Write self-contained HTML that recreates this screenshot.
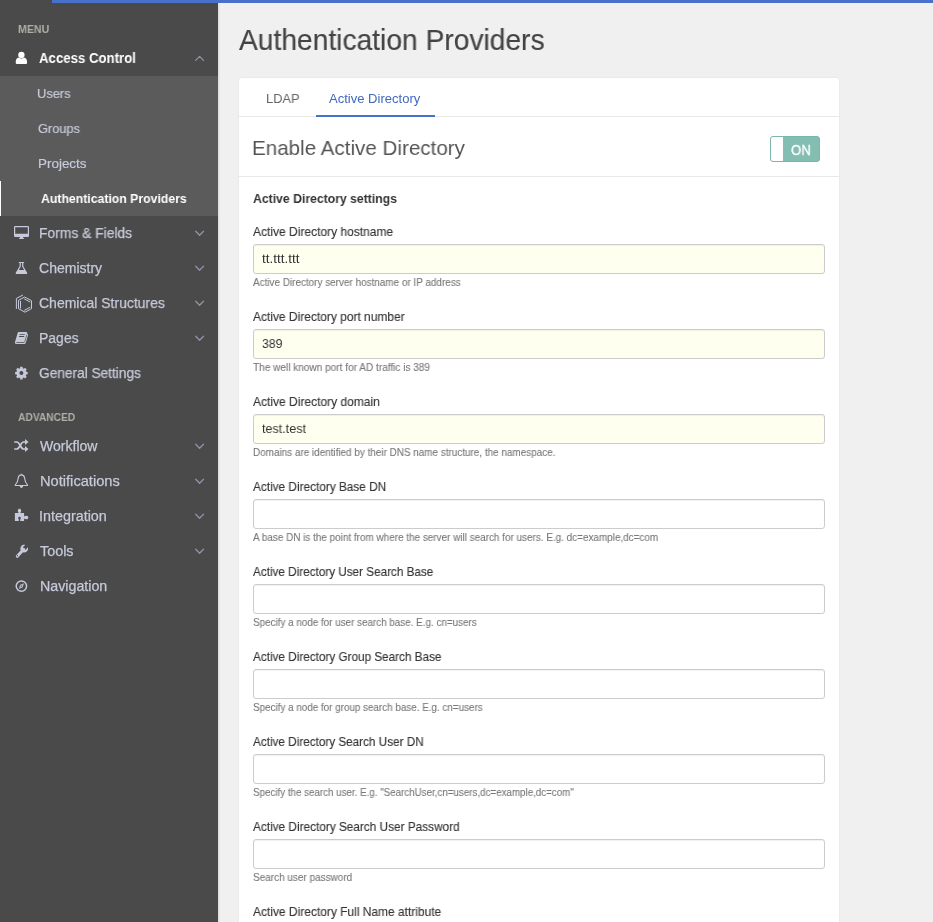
<!DOCTYPE html>
<html lang="en">
<head>
<meta charset="utf-8">
<title>Authentication Providers</title>
<style>
*{box-sizing:border-box;margin:0;padding:0}
html,body{width:933px;height:922px;overflow:hidden;background:#f0f0f0;font-family:"Liberation Sans",sans-serif;color:#444}
body{position:relative}
.abs{position:absolute;white-space:nowrap}
.t{position:absolute;white-space:nowrap;line-height:1;transform-origin:0 50%;will-change:transform}
#topbar{left:52px;top:0;width:881px;height:3px;background:#4872c9}
#sidebar{left:0;top:0;width:218px;height:922px;background:#4a4a4a;box-shadow:1px 0 2px rgba(0,0,0,.1)}
#submenu{left:0;top:76px;width:218px;height:140px;background:#5b5b5b}
#activebar{left:0;top:181px;width:1px;height:35px;background:#fff}
.sect{font-size:11px;font-weight:bold;color:#afafa6}
.nav{font-size:14px;color:#c6c9d9;-webkit-text-stroke:0.25px #c6c9d9}
.nav.act{color:#fff;font-weight:bold;-webkit-text-stroke:0}
.sub{font-size:13px;color:#c6c9d9;-webkit-text-stroke:0.2px #c6c9d9}
.sub.act{color:#fff;font-weight:bold;-webkit-text-stroke:0}
.title{font-size:28.6px;color:#444;-webkit-text-stroke:0.15px #444}
.tab{font-size:13px}
.h2{font-size:21px;color:#555}
.on{font-size:14px;color:#fff;-webkit-text-stroke:0.3px #fff}
.sett{font-size:13px;font-weight:bold;color:#333}
.lbl{font-size:12.6px;color:#333;-webkit-text-stroke:0.12px #333}
.val{font-size:13px;color:#333}
.help{font-size:10.4px;color:#777;-webkit-text-stroke:0.1px #777}
#card{left:239px;top:78px;width:600px;height:860px;background:#fff;border-radius:3px;box-shadow:0 0 2px rgba(0,0,0,.09)}
.hr{left:239px;width:600px;height:1px;background:#e8e8e8}
#tabline{left:316px;top:115px;width:119px;height:2px;background:#4872c9}
#toggle{left:770px;top:136px;width:50px;height:26px;border-radius:3px;background:#84bdb2;border:1px solid #7db6ab}
#knob{left:771px;top:137px;width:12px;height:24px;background:#fff;border-radius:2px 0 0 2px}
.inp{left:253px;width:572px;height:30px;border:1px solid #ccc;border-radius:3px;background:#fff;box-shadow:inset 0 1px 1px rgba(0,0,0,.06)}
.inp.y{background:#fffff0}
svg{position:absolute;overflow:visible}
</style>
</head>
<body>
<div class="abs" id="sidebar"></div>
<div class="abs" id="submenu"></div>
<div class="abs" id="activebar"></div>
<div class="abs" id="topbar"></div>
<div class="abs" id="card"></div>
<div class="abs hr" style="top:116px"></div>
<div class="abs" id="tabline"></div>
<div class="abs hr" style="top:176px"></div>
<div class="abs" id="toggle"></div>
<div class="abs" id="knob"></div>
<div class="abs inp y" style="top:244px"></div>
<div class="abs inp y" style="top:329px"></div>
<div class="abs inp y" style="top:414px"></div>
<div class="abs inp" style="top:499px"></div>
<div class="abs inp" style="top:584px"></div>
<div class="abs inp" style="top:669px"></div>
<div class="abs inp" style="top:754px"></div>
<div class="abs inp" style="top:839px"></div>
<svg style="left:0;top:0" width="218" height="922" viewBox="0 0 218 922">
<g fill="#fff"><circle cx="21.4" cy="54.9" r="3.15"/><path d="M15.7 62.6c0-3.2 1-5 3.2-5.2.7.7 1.5 1 2.5 1s1.800-.3 2.500-1c2.200.2 3.200 2 3.200 5.200 0 1-.6 1.500-1.600 1.500h-8.200c-1 0-1.600-.5-1.600-1.500z"/></g>
<g fill="#c6c9d9"><path fill-rule="evenodd" d="M15.200 226h12.600a1.200 1.200 0 0 1 1.200 1.200v8.600a1.200 1.200 0 0 1-1.200 1.200h-12.600a1.200 1.200 0 0 1-1.200-1.200v-8.600a1.200 1.200 0 0 1 1.200-1.200zM15.200 227.200v6.500h12.600v-6.500z"/><path d="M20 237h3l.4 1.300h.700v.700h-5.200v-.700h.700z"/></g>
<g fill="#c6c9d9"><path fill-rule="evenodd" d="M18.800 261.900h5.300v1h-.8v3.300l3.700 6.200c.5.900.1 1.600-.9 1.600h-9.300c-1 0-1.400-.7-.9-1.600l3.700-6.200v-3.300h-.8zM20.800 262.900v3.600l-2 3.500h5.400l-2.100-3.500v-3.600z"/></g>
<g fill="none" stroke="#c6c9d9" stroke-width="1" stroke-linejoin="round" stroke-linecap="round"><path d="M25 297.200l6.500 3.500v8l-6.500 3.500-6.500-3.500v-8z"/><path d="M20.500 301.300v6.800M24.500 299l5.400 2.900M24.600 310.200l5.300-2.800"/><path d="M16.400 308.500v-10.100l6.200-3.200"/></g>
<g fill="#c6c9d9"><path fill-rule="evenodd" d="M19 332.100h7.300c.6 0 .9.400.7 1l-.1.400c.9.100 1.400.8 1.100 1.700l-2.200 7.600c-.3.900-.9 1.300-1.800 1.300h-7.500c-1.200 0-1.900-.9-1.500-2l2.500-8.700c.3-.9.800-1.300 1.500-1.300zM19.700 333.900l-.2.800h5.200l.2-.8zM19.100 336.100l-.2.800h5.200l.2-.8zM16.300 341.900c-.2.600.1.900.6.900h7.100l.3-.9z"/><path d="M24.600 342.400l2.300-7.800" stroke="#4a4a4a" stroke-width=".7" fill="none"/></g>
<path fill="#c6c9d9" fill-rule="evenodd" d="M20.07 368.28L20.19 366.82L22.61 366.82L22.73 368.28L23.86 368.75L24.99 367.80L26.70 369.51L25.75 370.64L26.22 371.77L27.68 371.89L27.68 374.31L26.22 374.43L25.75 375.56L26.70 376.69L24.99 378.40L23.86 377.45L22.73 377.92L22.61 379.38L20.19 379.38L20.07 377.92L18.94 377.45L17.81 378.40L16.10 376.69L17.05 375.56L16.58 374.43L15.12 374.31L15.12 371.89L16.58 371.77L17.05 370.64L16.10 369.51L17.81 367.80L18.94 368.75ZM19.4 373.1a2 2 0 1 0 4 0a2 2 0 1 0-4 0Z"/>
<g fill="none" stroke="#c6c9d9" stroke-width="1.700"><path d="M14.200 442h2.600c3.200 0 3.600 7 6.800 7h2.400"/><path d="M14.200 449h2.600c3.200 0 3.600-7 6.800-7h2.400"/></g><g fill="#c6c9d9"><path d="M25 439v6l3.500-3z"/><path d="M25 446v6l3.500-3z"/></g>
<g fill="none" stroke="#c6c9d9" stroke-width="1.100" stroke-linejoin="round"><path d="M21.400 474.900c-1.900 0-3 1.300-3.200 3.200-.3 3.300-.9 5-2.900 6.800v.6h12.200v-.6c-2-1.800-2.600-3.500-2.900-6.800-.2-1.900-1.300-3.200-3.200-3.200z"/></g><path fill="#c6c9d9" d="M19.800 486.100h3.300c0 1.100-.7 1.900-1.650 1.900s-1.650-.8-1.650-1.900zM21 473.700h.8v1.200h-.8z"/>
<g fill="#c6c9d9"><path fill-rule="evenodd" d="M14.900 513h3.900c-.7-.6-1-1.400-1-2.300 0-1.100.8-1.900 1.700-1.900s1.700.8 1.700 1.900c0 .9-.3 1.700-1 2.300h3.900v3.500c.6-.5 1.300-.8 2.300-.8 1.100 0 1.900.8 1.900 1.800s-.8 1.800-1.900 1.800c-1 0-1.700-.3-2.300-.8v2.500h-3.900v-1.700c.4-.3.600-.7.600-1.200 0-.8-.6-1.400-1.300-1.400s-1.300.6-1.300 1.400c0 .5.200.9.600 1.200v1.700h-3.900z"/></g>
<g><path d="M17.300 556.300l6.400-7" stroke="#c6c9d9" stroke-width="3" stroke-linecap="round" fill="none"/><path fill="#c6c9d9" d="M27.900 547.200c.5 1.700 0 3.300-1.200 4.300-1.500 1.200-3.600 1.200-5 0-1.600-1.400-1.800-3.700-.5-5.300 1-1.200 2.500-1.700 4-1.300l-2.300 2.400.5 2 2 .6z"/><circle cx="17.400" cy="555.700" r=".6" fill="#4a4a4a"/></g>
<g><circle cx="21.400" cy="586.100" r="5.200" fill="none" stroke="#c6c9d9" stroke-width="1.500"/><path fill="#c6c9d9" opacity=".85" d="M24 583.200l-1.300 4.200-3.900 1.600 1.300-4.200z"/><circle cx="21.400" cy="586.100" r=".6" fill="#4a4a4a"/></g>
<g fill="none" stroke="#9093a6" stroke-width="1.300" stroke-linecap="round" stroke-linejoin="round">
<path d="M195.700 60.400l3.900-4 3.900 4"/>
<path d="M195.700 231.3l3.900 4 3.900-4"/>
<path d="M195.700 266.3l3.900 4 3.900-4"/>
<path d="M195.700 301.3l3.900 4 3.900-4"/>
<path d="M195.700 336.3l3.900 4 3.900-4"/>
<path d="M195.700 444.3l3.900 4 3.900-4"/>
<path d="M195.700 479.3l3.900 4 3.900-4"/>
<path d="M195.700 514.3l3.900 4 3.900-4"/>
<path d="M195.700 549.3l3.900 4 3.900-4"/>
</g></svg>
<div class="t sect" style="left:17.85px;top:23.69px;transform:scaleX(0.9640);">MENU</div>
<div class="t nav act" style="left:39.43px;top:51.15px;transform:scaleX(0.9437);">Access Control</div>
<div class="t sub" style="left:37.4px;top:87.00px;transform:scaleX(0.9866);">Users</div>
<div class="t sub" style="left:37.52px;top:122.00px;transform:scaleX(0.9806);">Groups</div>
<div class="t sub" style="left:37.9px;top:157.00px;transform:scaleX(1.0337);">Projects</div>
<div class="t sub act" style="left:40.73px;top:192.00px;transform:scaleX(0.9432);">Authentication Providers</div>
<div class="t nav" style="left:39.08px;top:226.15px;transform:scaleX(0.9895);">Forms &amp; Fields</div>
<div class="t nav" style="left:39.26px;top:261.15px;transform:scaleX(1.0016);">Chemistry</div>
<div class="t nav" style="left:39.27px;top:296.15px;transform:scaleX(0.9986);">Chemical Structures</div>
<div class="t nav" style="left:38.94px;top:331.15px;transform:scaleX(0.9952);">Pages</div>
<div class="t nav" style="left:39.31px;top:366.15px;transform:scaleX(0.9769);">General Settings</div>
<div class="t sect" style="left:17.55px;top:411.69px;transform:scaleX(0.9303);">ADVANCED</div>
<div class="t nav" style="left:39.6px;top:439.15px;transform:scaleX(1.0033);">Workflow</div>
<div class="t nav" style="left:39.53px;top:474.15px;transform:scaleX(1.0464);">Notifications</div>
<div class="t nav" style="left:39.07px;top:509.15px;transform:scaleX(1.0252);">Integration</div>
<div class="t nav" style="left:40.11px;top:544.15px;transform:scaleX(1.0247);">Tools</div>
<div class="t nav" style="left:39.62px;top:579.15px;transform:scaleX(1.0165);">Navigation</div>
<div class="t title" style="left:238.95px;top:26.39px;transform:scaleX(0.9860);">Authentication Providers</div>
<div class="t tab" style="left:266.39px;top:92.00px;transform:scaleX(0.9895);color:#666">LDAP</div>
<div class="t tab" style="left:329.4px;top:92.00px;transform:scaleX(1.0027);color:#4169c0">Active Directory</div>
<div class="t h2" style="left:252.46px;top:137.22px;transform:scaleX(0.9809);">Enable Active Directory</div>
<div class="t on" style="left:790.77px;top:143.15px;transform:scaleX(0.9385);">ON</div>
<div class="t sett" style="left:252.77px;top:192.00px;transform:scaleX(0.9397);">Active Directory settings</div>
<div class="t lbl" style="left:252.9px;top:226.13px;transform:scaleX(0.9531);">Active Directory hostname</div>
<div class="t val" style="left:261.8px;top:252.00px;transform:scaleX(1.0368);">tt.ttt.ttt</div>
<div class="t help" style="left:253.0px;top:278.00px;transform:scaleX(0.9548);">Active Directory server hostname or IP address</div>
<div class="t lbl" style="left:252.9px;top:311.13px;transform:scaleX(0.9502);">Active Directory port number</div>
<div class="t val" style="left:261.8px;top:337.00px;transform:scaleX(0.9414);">389</div>
<div class="t help" style="left:253.0px;top:363.00px;transform:scaleX(0.9681);">The well known port for AD traffic is 389</div>
<div class="t lbl" style="left:252.9px;top:396.13px;transform:scaleX(0.9532);">Active Directory domain</div>
<div class="t val" style="left:261.8px;top:422.00px;transform:scaleX(0.9657);">test.test</div>
<div class="t help" style="left:253.0px;top:448.00px;transform:scaleX(0.9536);">Domains are identified by their DNS name structure, the namespace.</div>
<div class="t lbl" style="left:252.9px;top:481.13px;transform:scaleX(0.9371);">Active Directory Base DN</div>
<div class="t help" style="left:253.0px;top:533.00px;transform:scaleX(0.9546);">A base DN is the point from where the server will search for users. E.g. dc=example,dc=com</div>
<div class="t lbl" style="left:252.9px;top:566.13px;transform:scaleX(0.9300);">Active Directory User Search Base</div>
<div class="t help" style="left:253.0px;top:618.00px;transform:scaleX(0.9481);">Specify a node for user search base. E.g. cn=users</div>
<div class="t lbl" style="left:252.9px;top:651.13px;transform:scaleX(0.9317);">Active Directory Group Search Base</div>
<div class="t help" style="left:253.0px;top:703.00px;transform:scaleX(0.9478);">Specify a node for group search base. E.g. cn=users</div>
<div class="t lbl" style="left:252.9px;top:736.13px;transform:scaleX(0.9309);">Active Directory Search User DN</div>
<div class="t help" style="left:253.0px;top:788.00px;transform:scaleX(0.9410);">Specify the search user. E.g. "SearchUser,cn=users,dc=example,dc=com"</div>
<div class="t lbl" style="left:252.9px;top:821.13px;transform:scaleX(0.9372);">Active Directory Search User Password</div>
<div class="t help" style="left:253.0px;top:873.00px;transform:scaleX(0.9594);">Search user password</div>
<div class="t lbl" style="left:252.9px;top:906.13px;transform:scaleX(0.9505);">Active Directory Full Name attribute</div>
</body>
</html>
